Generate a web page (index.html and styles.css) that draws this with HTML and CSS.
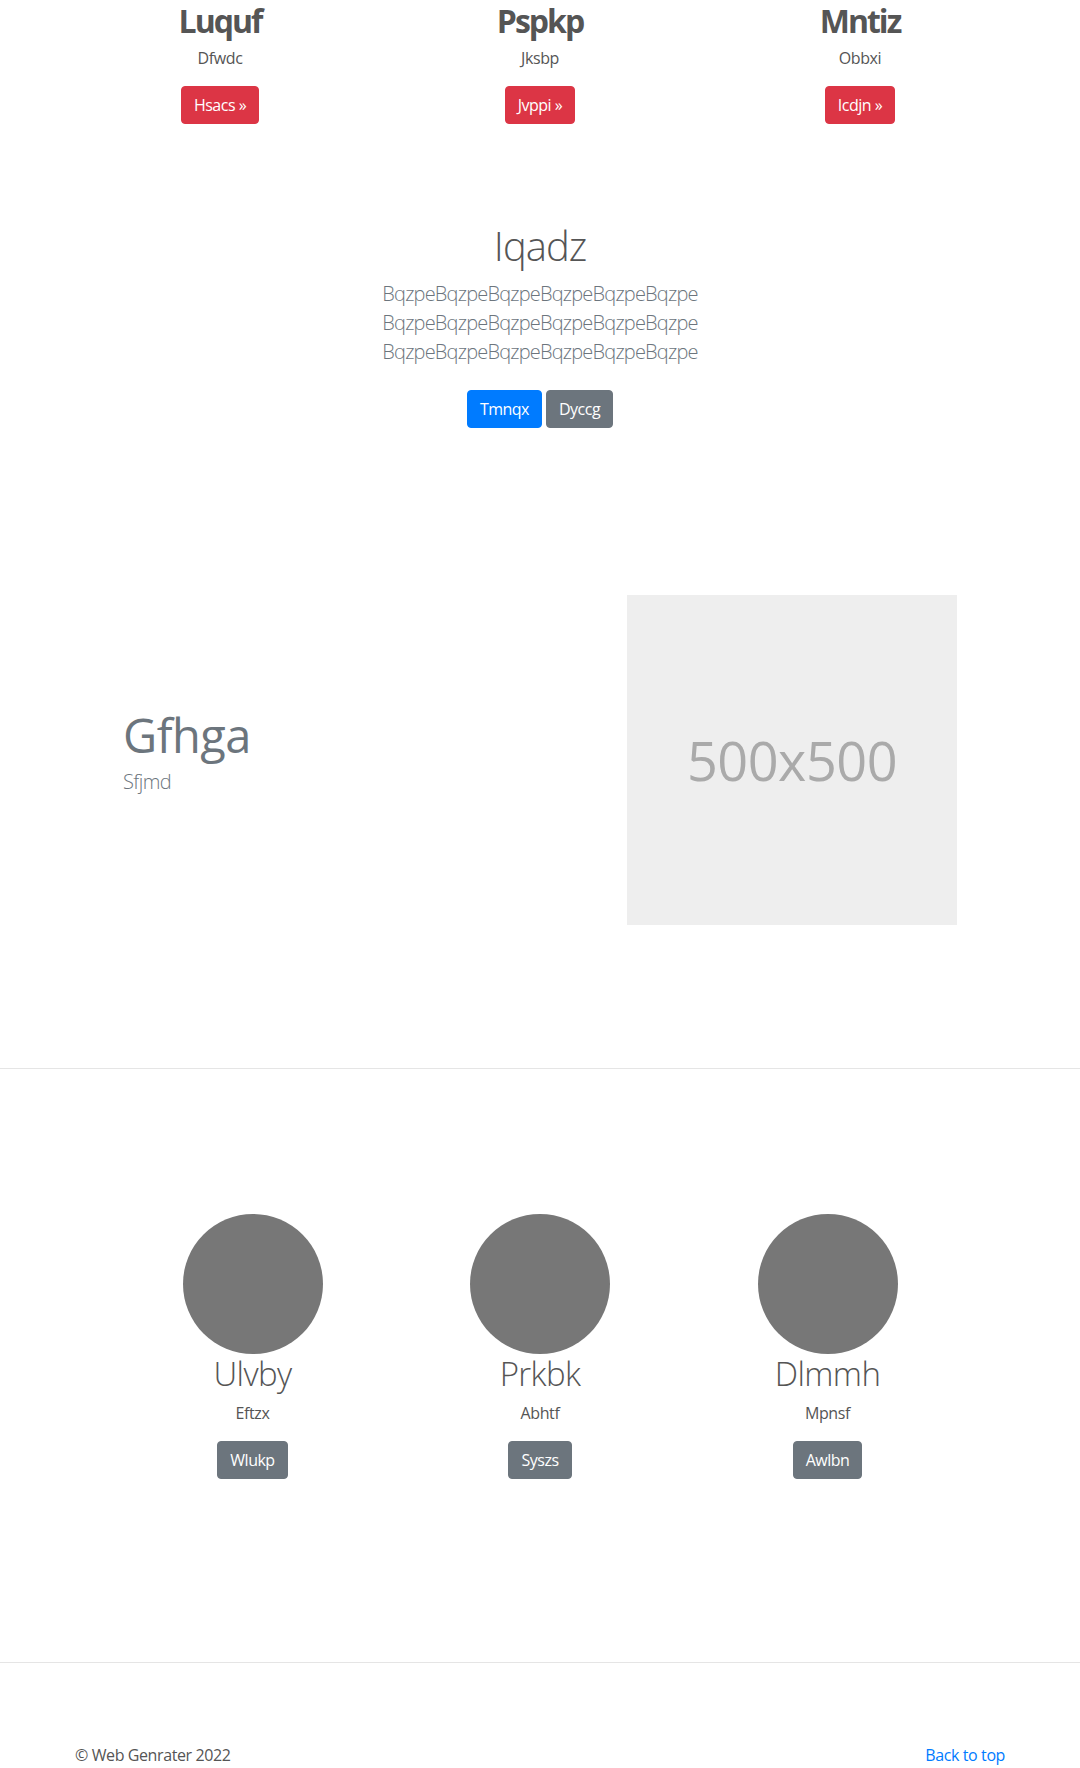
FILE: index.html
```html
<!DOCTYPE html>
<html lang="en">
<head>
<meta charset="utf-8">
<title>Web Genrater</title>
<link rel="stylesheet" href="styles.css">
</head>
<body>
<section class="features">
  <div class="feature">
    <h2 class="feature-title">Luquf</h2>
    <p class="feature-sub">Dfwdc</p>
    <a class="btn btn-danger" href="#">Hsacs &raquo;</a>
  </div>
  <div class="feature">
    <h2 class="feature-title">Pspkp</h2>
    <p class="feature-sub">Jksbp</p>
    <a class="btn btn-danger" href="#">Jvppi &raquo;</a>
  </div>
  <div class="feature">
    <h2 class="feature-title">Mntiz</h2>
    <p class="feature-sub">Obbxi</p>
    <a class="btn btn-danger" href="#">Icdjn &raquo;</a>
  </div>
</section>

<section class="hero">
  <h1 class="hero-title">Iqadz</h1>
  <p class="lead">BqzpeBqzpeBqzpeBqzpeBqzpeBqzpe<br>BqzpeBqzpeBqzpeBqzpeBqzpeBqzpe<br>BqzpeBqzpeBqzpeBqzpeBqzpeBqzpe</p>
  <div class="hero-actions">
    <a class="btn btn-primary" href="#">Tmnqx</a>
    <a class="btn btn-secondary" href="#">Dyccg</a>
  </div>
</section>

<section class="showcase">
  <div class="showcase-text">
    <h1 class="showcase-title">Gfhga</h1>
    <p class="showcase-sub">Sfjmd</p>
  </div>
  <div class="placeholder">500x500</div>
</section>

<hr class="divider">

<section class="team">
  <div class="member">
    <div class="avatar"></div>
    <h2 class="member-name">Ulvby</h2>
    <p class="member-role">Eftzx</p>
    <a class="btn btn-secondary" href="#">Wlukp</a>
  </div>
  <div class="member">
    <div class="avatar"></div>
    <h2 class="member-name">Prkbk</h2>
    <p class="member-role">Abhtf</p>
    <a class="btn btn-secondary" href="#">Syszs</a>
  </div>
  <div class="member">
    <div class="avatar"></div>
    <h2 class="member-name">Dlmmh</h2>
    <p class="member-role">Mpnsf</p>
    <a class="btn btn-secondary" href="#">Awlbn</a>
  </div>
</section>

<hr class="divider">

<footer class="footer">
  <p class="copyright">&copy; Web Genrater 2022</p>
  <a class="back-top" href="#">Back to top</a>
</footer>
</body>
</html>
```

FILE: styles.css
```css
* { box-sizing: border-box; }

html, body {
  margin: 0;
  padding: 0;
  background: #fff;
}

body {
  font-family: "Open Sans", "Noto Sans", sans-serif;
  font-size: 16px;
  line-height: 1.5;
  color: #555;
  letter-spacing: -0.4px;
}

a { text-decoration: none; }

.btn {
  display: inline-block;
  font-size: 16px;
  line-height: 24px;
  padding: 6px 12px;
  border: 1px solid transparent;
  border-radius: 4px;
  color: #fff;
  font-weight: 400;
  letter-spacing: -0.5px;
}
.btn-danger { background: #dc3545; border-color: #dc3545; }
.btn-primary { background: #007bff; border-color: #007bff; }
.btn-secondary { background: #6c757d; border-color: #6c757d; }

/* features */
.features {
  width: 960px;
  margin: 0 auto;
  display: grid;
  grid-template-columns: repeat(3, 1fr);
  text-align: center;
}
.feature-title {
  margin: 0 0 6px;
  font-size: 32px;
  line-height: 38px;
  font-weight: 700;
  letter-spacing: -2px;
  color: #555;
  padding-top: 2px;
}
.feature-sub {
  margin: 0 0 16px;
  color: #555;
}

/* hero */
.hero {
  padding-top: 98px;
  text-align: center;
}
.hero-title {
  margin: 0 0 9px;
  font-size: 40px;
  line-height: 1.2;
  font-weight: 300;
  letter-spacing: -1px;
  color: #555;
}
.lead {
  margin: 0 0 24px;
  font-size: 20px;
  line-height: 29px;
  font-weight: 300;
  letter-spacing: -0.8px;
  color: #6c757d;
}
.hero-actions {
  display: flex;
  justify-content: center;
  gap: 4px;
}

/* showcase */
.showcase {
  display: flex;
  align-items: center;
  padding: 167px 0 143px 123px;
}
.showcase-text {
  width: 504px;
}
.showcase-title {
  margin: 0 0 3px;
  font-size: 47px;
  line-height: 1.2;
  font-weight: 400;
  letter-spacing: -0.5px;
  color: #6c757d;
}
.showcase-sub {
  margin: 0 0 16px;
  font-size: 20px;
  line-height: 30px;
  font-weight: 300;
  letter-spacing: -0.6px;
  color: #6c757d;
}
.placeholder {
  width: 330px;
  height: 330px;
  background: #eee;
  color: #aaa;
  font-size: 54px;
  letter-spacing: -0.5px;
  display: flex;
  align-items: center;
  justify-content: center;
}

.divider {
  margin: 0;
  border: 0;
  border-top: 1px solid rgba(0, 0, 0, 0.1);
}

/* team */
.team {
  width: 862.5px;
  margin: 0 auto;
  padding: 145px 0 183px;
  display: grid;
  grid-template-columns: repeat(3, 1fr);
  text-align: center;
}
.member {
  display: flex;
  flex-direction: column;
  align-items: center;
}
.avatar {
  width: 140px;
  height: 140px;
  border-radius: 50%;
  background: #777;
}
.member-name {
  margin: 0 0 7px;
  font-size: 33px;
  line-height: 1.2;
  font-weight: 300;
  letter-spacing: -0.6px;
  color: #555;
}
.member-role {
  margin: 0 0 16px;
  color: #555;
}

/* footer */
.footer {
  width: 930px;
  margin: 0 auto;
  padding-top: 80px;
  display: flex;
  justify-content: space-between;
}
.copyright {
  margin: 0;
  color: #555;
}
.back-top {
  color: #007bff;
}
```
